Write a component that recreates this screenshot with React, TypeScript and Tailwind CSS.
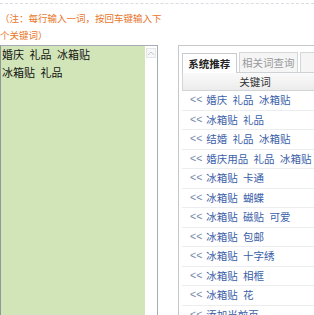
import React from 'react';

const rows = [
  '婚庆 礼品 冰箱贴',
  '冰箱贴 礼品',
  '结婚 礼品 冰箱贴',
  '婚庆用品 礼品 冰箱贴',
  '冰箱贴 卡通',
  '冰箱贴 蝴蝶',
  '冰箱贴 磁贴 可爱',
  '冰箱贴 包邮',
  '冰箱贴 十字绣',
  '冰箱贴 相框',
  '冰箱贴 花',
  '添加当前页',
];

const cjk = { fontFamily: '"Noto Sans CJK SC", "Liberation Sans", sans-serif' };

export default function App() {
  return (
    <div className="w-[314px] h-[315px] overflow-hidden bg-white" style={cjk}>
      <div className="mt-[3px] border-t border-dashed border-[#d8dde3]" />
      <div className="flex">
        {/* left: hint + keyword textarea */}
        <div className="w-[158px] shrink-0">
          <div className="pt-[6px] text-[9.5px] leading-[17px] text-[#e9772b]">
            <div className="whitespace-nowrap">（注：每行输入一词，按回车键输入下</div>
            <div className="whitespace-nowrap">个关键词）</div>
          </div>
          <div className="mt-[1px] h-[280px] flex border border-[#a4adb3] border-l-[#8e9a93]">
            <div className="flex-1 bg-[#d1e5b9] text-[11px] leading-[17.5px] text-[#111] pl-[1px] whitespace-nowrap [word-spacing:3px]">
              <div>婚庆 礼品 冰箱贴</div>
              <div>冰箱贴 礼品</div>
            </div>
            <div className="w-[12px] bg-white pt-[2px] flex justify-center">
              <div className="w-[10px] h-[10px] border border-[#e3e6e8] bg-[#f7f8f9] flex items-center justify-center">
                <svg width="6" height="4" viewBox="0 0 6 4">
                  <path d="M0 4 L3 1 L6 4" fill="none" stroke="#c4c9cd" strokeWidth="1" />
                </svg>
              </div>
            </div>
          </div>
        </div>

        {/* right: suggestion panel */}
        <div className="ml-[20px] mt-[41px] w-[154px] shrink-0 border border-[#c6c9cc] bg-white px-[3px]">
          <div className="flex items-end gap-[2px] pt-[6px] h-[27px] border-b border-[#cfd2d5]">
            <div className="w-[58px] h-[20px] border border-b-0 border-[#c8cbce] bg-white flex items-center justify-center text-[10.5px] font-bold text-[#222] -mb-px">
              系统推荐
            </div>
            <div className="w-[63px] h-[20px] border border-b-0 border-[#d4d6d8] bg-[#f5f5f5] flex items-center justify-center text-[10.5px] text-[#999]">
              相关词查询
            </div>
            <div className="w-[30px] h-[20px] border border-b-0 border-[#d4d6d8] bg-[#f5f5f5]" />
          </div>
          <div className="h-[18px] border-x border-b border-[#d2d4d6] bg-gradient-to-b from-[#fafafa] to-[#ececec] flex items-center justify-center text-[10.5px] text-[#333]">
            关键词
          </div>
          {rows.map((r, i) => (
            <div
              key={i}
              className="h-[19.5px] flex items-center pl-[8px] border-b border-[#ebedef] text-[10.5px] text-[#3a5ea8] whitespace-nowrap [word-spacing:3px]"
            >
              <span className="text-[#7586ab] mr-[4px]" style={{ fontFamily: '"Liberation Sans", sans-serif' }}>&lt;&lt;</span>
              {r}
            </div>
          ))}
        </div>
      </div>
    </div>
  );
}
